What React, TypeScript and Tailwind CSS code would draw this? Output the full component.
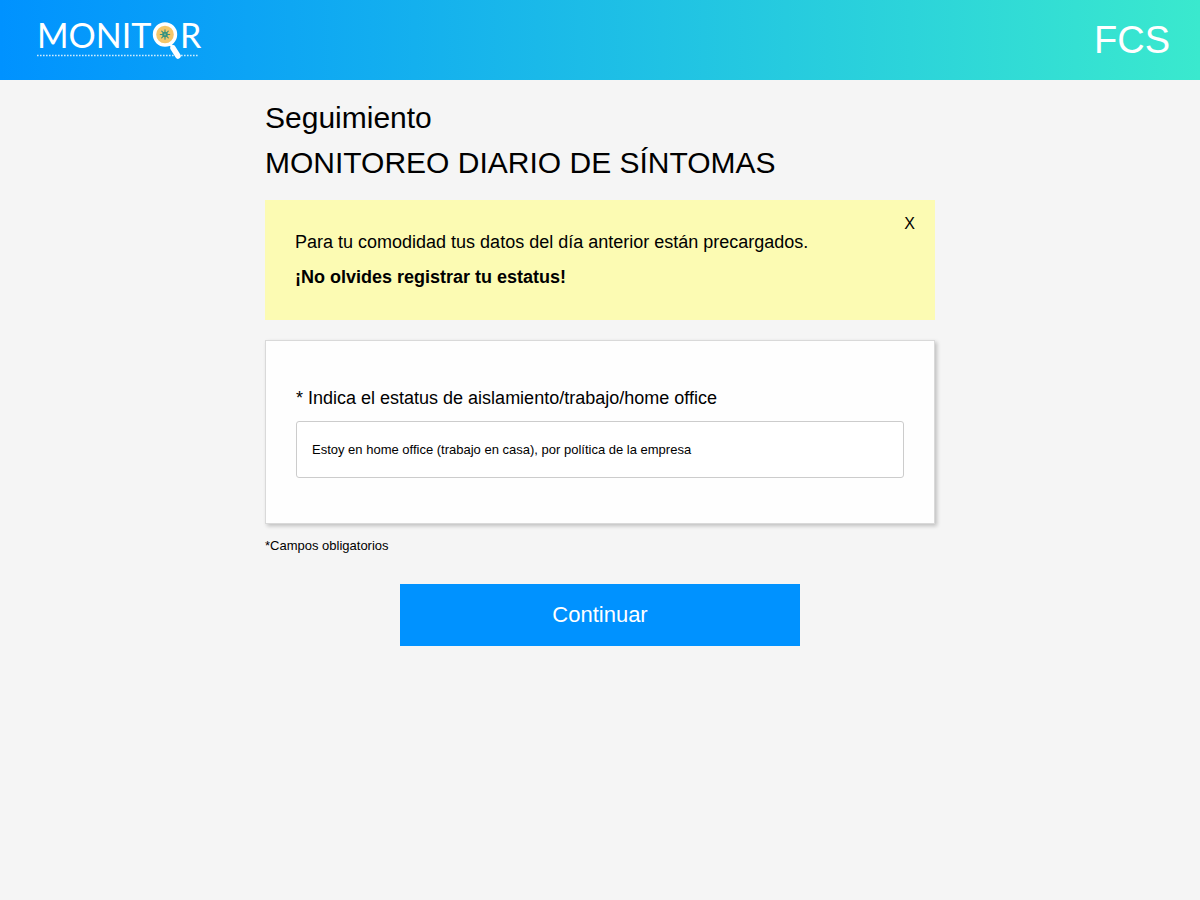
import { useState } from "react";

const statuses = ["Estoy en home office (trabajo en casa), por política de la empresa"];

function Logo() {
  return (
    <svg width="170" height="48" viewBox="0 -2 170 48" role="img" aria-label="MONITOR" className="overflow-visible">
      <g fill="#fff" fontSize="34" className="font-['Lato',sans-serif]">
        <text x="2" y="30">MONIT</text>
        <text x="145" y="30">R</text>
      </g>
      <line x1="2" y1="37.5" x2="164" y2="37.5" stroke="#fff" strokeOpacity="0.8" strokeWidth="1.6" strokeDasharray="1.6 1.4" />
      <line x1="138" y1="30" x2="143" y2="38" stroke="#fff" strokeWidth="5.5" strokeLinecap="round" />
      <line x1="134" y1="24" x2="138" y2="30" stroke="#fff" strokeWidth="2.5" />
      <circle cx="130" cy="16.5" r="10.5" fill="#f3c76b" stroke="#fff" strokeWidth="3.4" />
      <circle cx="130" cy="16.5" r="2.8" fill="#35917f" />
      <path
        d="M130 11.8v9.4M125.3 16.5h9.4M126.7 13.2l6.6 6.6M133.3 13.2l-6.6 6.6"
        stroke="#35917f"
        strokeWidth="1.1"
        strokeLinecap="round"
      />
      <circle cx="130" cy="16.5" r="1" fill="#8fb580" />
    </svg>
  );
}

export default function App() {
  const [noticeOpen, setNoticeOpen] = useState(true);

  return (
    <div className="min-h-screen bg-[#f5f5f5] font-['Liberation_Sans',Arial,sans-serif] text-black">
      <header className="flex h-20 items-center justify-between bg-linear-to-r/srgb from-[#0092ff] to-[#3ae9ce] pr-[30px] pl-[35px]">
        <Logo />
        <span className="text-[38px] leading-none text-white">FCS</span>
      </header>

      <main className="mx-auto max-w-[670px] pt-[15px]">
        <h1 className="text-[30px] leading-[45px]">Seguimiento</h1>
        <h2 className="text-[30px] leading-[45px]">MONITOREO DIARIO DE SÍNTOMAS</h2>

        {noticeOpen && (
          <section className="mt-[15px] flex items-start justify-between bg-[#fcfbb3] pb-[25px] pl-[30px] text-lg">
            <div className="pt-[25px] leading-[35px]">
              <p>Para tu comodidad tus datos del día anterior están precargados.</p>
              <p className="font-bold">¡No olvides registrar tu estatus!</p>
            </div>
            <button
              type="button"
              onClick={() => setNoticeOpen(false)}
              className="mt-3 mr-5 cursor-pointer text-base leading-6"
            >
              X
            </button>
          </section>
        )}

        <form>
          <div className="mt-5 border border-[#d9d9d9] bg-[#fefefe] px-[30px] pt-10 pb-[45px] shadow-[2px_2px_4px_rgba(0,0,0,0.22)]">
            <label htmlFor="status" className="mb-[5px] block text-lg leading-[35px]">
              * Indica el estatus de aislamiento/trabajo/home office
            </label>
            <select
              id="status"
              className="block h-[57px] w-full appearance-none rounded-[3px] border border-[#cccccc] bg-white px-[15px] text-[13px]"
            >
              {statuses.map((status) => (
                <option key={status}>{status}</option>
              ))}
            </select>
          </div>
          <p className="mt-3 text-[13px] leading-5">*Campos obligatorios</p>
          <button
            type="button"
            className="mx-auto mt-7 block h-[62px] w-full max-w-[400px] cursor-pointer bg-[#0092ff] pb-0.5 text-[22px] text-white"
          >
            Continuar
          </button>
        </form>
      </main>
    </div>
  );
}
